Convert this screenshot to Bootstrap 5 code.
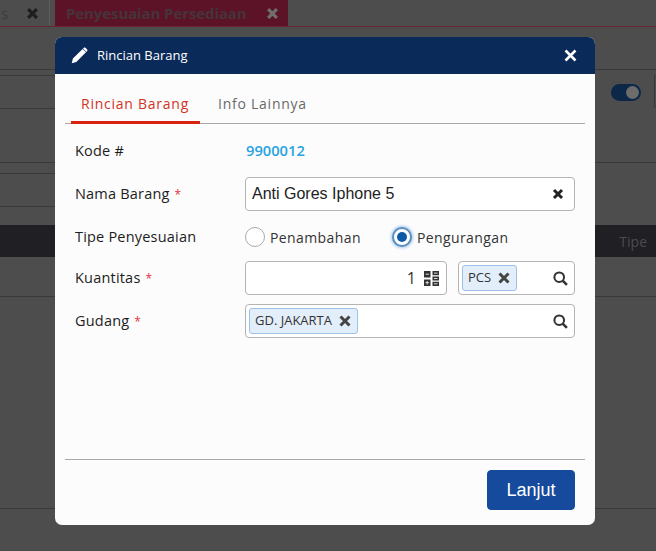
<!DOCTYPE html>
<html lang="en">
<head>
    <meta charset="UTF-8">
    <meta name="viewport" content="width=device-width, initial-scale=1.0">
    <title>Rincian Barang</title>
    <link href="https://cdn.jsdelivr.net/npm/bootstrap@5.3.0/dist/css/bootstrap.min.css" rel="stylesheet">
    <style>
        html, body {
            height: 100%;
            overflow: hidden;
        }
        body {
            background-color: #4d4d4d;
            font-family: "Open Sans", "Liberation Sans", sans-serif;
            font-size: 14px;
            color: #1c1c1c;
            position: relative;
        }
        /* page behind the dialog */
        .page-tabs {
            height: 27px;
            border-bottom: 1px solid #6b2232;
        }
        .page-tab {
            height: 26px;
            font-weight: 700;
            font-size: 15px;
            color: #3c3c3c;
        }
        .page-tab-first {
            width: 50px;
            padding-left: 1px;
            border-right: 1px solid #5c5c5c;
            font-weight: 400;
        }
        .page-tab-active {
            width: 233px;
            margin-left: 5px;
            padding-left: 11px;
            background-color: #5c1328;
            color: #46343a;
            letter-spacing: -.1px;
        }
        .page-tab svg {
            margin-left: auto;
        }
        .page-tab-first svg {
            margin-right: 10px;
        }
        .page-tab-active svg {
            margin-right: 9px;
        }
        .page-line {
            border-bottom: 1px solid #393939;
        }
        .page-gap-42 { height: 43px; }
        .page-gap-6 { height: 6px; width: 55px; }
        .page-gap-33 { height: 33px; width: 55px; }
        .page-gap-54 { height: 54px; }
        .page-gap-11 { height: 11px; width: 55px; }
        .page-gap-18 { height: 18px; }
        .page-band {
            height: 32px;
            background-color: #1f1f24;
            color: #4c4c50;
        }
        .page-band span {
            padding-right: 9px;
        }
        .page-gap-40 { height: 40px; }
        .page-gap-212 { height: 212px; }
        .page-toggle {
            position: absolute;
            left: 611px;
            top: 84px;
            width: 30px;
            height: 17px;
            border-radius: 9px;
            background-color: #0c2748;
        }
        .page-toggle::after {
            content: "";
            position: absolute;
            right: 2px;
            top: 2px;
            width: 13px;
            height: 13px;
            border-radius: 50%;
            background-color: #6c6c6c;
        }
        .page-input-edge {
            position: absolute;
            left: 654px;
            top: 75px;
            width: 4px;
            height: 33px;
            border: 1px solid #393939;
            border-radius: 3px;
        }
        /* dialog */
        .dialog-box {
            position: absolute;
            left: 55px;
            top: 37px;
            width: 540px;
            height: 488px;
            background-color: #fcfcfd;
            border-radius: 7px;
            overflow: hidden;
        }
        .dialog-head {
            height: 37px;
            background-color: #0a2a5a;
            color: #fff;
            padding: 0 18px 0 16px;
            font-size: 13px;
        }
        .dialog-head .head-title {
            margin-left: 9px;
        }
        .dialog-tabs {
            margin: 22px 10px 0;
            height: 28px;
            border-bottom: 1px solid #a8a8a8;
        }
        .dialog-tab {
            height: 28px;
            padding: 0 10px;
            font-size: 14px;
            letter-spacing: .75px;
            color: #6a6a6a;
            line-height: 15px;
        }
        .dialog-tab-active {
            color: #d2331f;
            border-bottom: 3px solid #d9230f;
            margin-left: 6px;
            width: 129px;
            padding-left: 10px;
        }
        .dialog-tab-next {
            margin-left: 8px;
        }
        .dialog-form {
            padding: 0 20px;
        }
        .form-line {
            display: flex;
            align-items: center;
        }
        .line-kode { height: 53px; }
        .line-nama { height: 34px; }
        .line-tipe { height: 50px; padding-top: 2px; }
        .line-qty { height: 34px; }
        .line-gudang { height: 34px; margin-top: 9px; }
        .form-label-text {
            width: 170px;
            font-size: 14.5px;
            letter-spacing: .2px;
            flex-shrink: 0;
        }
        .req {
            color: #e0344a;
            font-size: 12px;
            margin-left: 1px;
        }
        .kode-value {
            color: #29a3e0;
            font-size: 14.7px;
            font-weight: 600;
            margin-left: 1px;
        }
        .field-box {
            height: 34px;
            border: 1px solid #b4b4b4;
            border-radius: 4px;
            background-color: #fff;
            display: flex;
            align-items: center;
        }
        .field-full { width: 330px; }
        .field-qty { width: 202px; }
        .field-unit { width: 117px; margin-left: 11px; }
        .nama-text {
            font-family: "Liberation Sans", Arial, sans-serif;
            font-size: 16px;
            margin-left: 6px;
            color: #222;
        }
        .field-icon {
            margin-left: auto;
            margin-right: 6px;
        }
        .field-clear {
            margin-left: auto;
            margin-right: 10px;
        }
        .field-num {
            margin-left: auto;
            margin-right: 8px;
            font-size: 16px;
            color: #333;
        }
        .field-num + svg {
            margin-right: 7px;
        }
        .tag-chip {
            height: 26px;
            margin-left: 3px;
            padding: 0 6px 0 5px;
            display: flex;
            align-items: center;
            gap: 7px;
            background-color: #e3eefb;
            border: 1px solid #9cc0e6;
            border-radius: 3px;
            font-size: 13px;
            color: #333;
        }
        .radio-dot {
            width: 20px;
            height: 20px;
            border: 1px solid #a9a9a9;
            border-radius: 50%;
            background-color: #fff;
            flex-shrink: 0;
        }
        .radio-dot-on {
            border: 2px solid #5b8fc0;
            box-shadow: 0 0 3px 1px #a9c9ea;
            position: relative;
        }
        .radio-dot-on::after {
            content: "";
            position: absolute;
            left: 3px;
            top: 3px;
            width: 10px;
            height: 10px;
            border-radius: 50%;
            background-color: #0d5aa7;
        }
        .radio-text {
            margin-left: 5px;
            letter-spacing: .4px;
            color: #333;
        }
        .radio-gap {
            margin-left: 31px;
        }
        .dialog-foot {
            position: absolute;
            left: 10px;
            right: 10px;
            top: 422px;
            border-top: 1px solid #a8a8a8;
            padding: 10px 10px 0 0;
            display: flex;
            justify-content: flex-end;
        }
        .btn-lanjut {
            width: 88px;
            height: 40px;
            padding: 0;
            background-color: #154a9c;
            border-color: #154a9c;
            font-family: "Liberation Sans", Arial, sans-serif;
            font-size: 18px;
            color: #fff;
            border-radius: 4px;
        }
    </style>
</head>
<body>
    <div class="page-tabs d-flex">
        <div class="page-tab page-tab-first d-flex align-items-center">
            s
            <svg width="13" height="13" viewBox="0 0 12 12"><path d="M2 2l8 8M10 2l-8 8" stroke="#1e1e1e" stroke-width="3"/></svg>
        </div>
        <div class="page-tab page-tab-active d-flex align-items-center">
            Penyesuaian Persediaan
            <svg width="13" height="13" viewBox="0 0 12 12"><path d="M2 2l8 8M10 2l-8 8" stroke="#6e6e6e" stroke-width="3"/></svg>
        </div>
    </div>
    <div class="page-gap-42 page-line"></div>
    <div class="page-gap-6 page-line"></div>
    <div class="page-gap-33 page-line"></div>
    <div class="page-gap-54 page-line"></div>
    <div class="page-gap-11 page-line"></div>
    <div class="page-gap-33 page-line"></div>
    <div class="page-gap-18"></div>
    <div class="page-band d-flex align-items-center justify-content-end"><span>Tipe</span></div>
    <div class="page-gap-40 page-line"></div>
    <div class="page-gap-212 page-line"></div>
    <div class="page-toggle"></div>
    <div class="page-input-edge"></div>

    <div class="dialog-box">
        <div class="dialog-head d-flex align-items-center">
            <svg width="17" height="17" viewBox="0 0 17 17"><path fill="#fff" d="M11.600 1.900l3.400 3.400-9.700 9.700-4.600 1.200 1.200-4.600zM12.600.9c.6-.6 1.400-.6 2 0l1.400 1.400c.6.6.6 1.400 0 2l-.6.6-3.400-3.400z"/></svg>
            <span class="head-title">Rincian Barang</span>
            <svg class="ms-auto" width="13" height="13" viewBox="0 0 13 13"><path d="M1.500 1.500l10 10M11.500 1.500l-10 10" stroke="#fff" stroke-width="2.600"/></svg>
        </div>
        <div class="dialog-tabs d-flex">
            <div class="dialog-tab dialog-tab-active">Rincian Barang</div>
            <div class="dialog-tab dialog-tab-next">Info Lainnya</div>
        </div>
        <div class="dialog-form">
            <div class="form-line line-kode">
                <div class="form-label-text">Kode #</div>
                <div class="kode-value">9900012</div>
            </div>
            <div class="form-line line-nama">
                <div class="form-label-text">Nama Barang <span class="req">*</span></div>
                <div class="field-box field-full">
                    <span class="nama-text">Anti Gores Iphone 5</span>
                    <svg class="field-clear" width="12" height="12" viewBox="0 0 12 12"><path d="M2 2l8 8M10 2l-8 8" stroke="#222" stroke-width="3"/></svg>
                </div>
            </div>
            <div class="form-line line-tipe">
                <div class="form-label-text">Tipe Penyesuaian</div>
                <div class="radio-dot"></div>
                <span class="radio-text">Penambahan</span>
                <div class="radio-dot radio-dot-on radio-gap"></div>
                <span class="radio-text">Pengurangan</span>
            </div>
            <div class="form-line line-qty">
                <div class="form-label-text">Kuantitas <span class="req">*</span></div>
                <div class="field-box field-qty">
                    <span class="field-num">1</span>
                    <svg width="15" height="15" viewBox="0 0 15 15"><path fill="#333" d="M0 0h6.500v6.500H0zM8.500 0H15v4.300H8.500zM8.500 5.400H15v4.200H8.500zM8.500 10.700H15V15H8.500zM0 8.500h6.500V15H0z"/><path stroke="#fff" stroke-width=".8" d="M1.500 3.200h3.500M1.500 11.700h3.500M3.200 10v3.500M10 2.100h3.500M10 7.500h3.500M10 12.800h3.500"/></svg>
                </div>
                <div class="field-box field-unit">
                    <div class="tag-chip">PCS
                        <svg width="12" height="12" viewBox="0 0 12 12"><path d="M1.500 1.500l9 9M10.500 1.500l-9 9" stroke="#444" stroke-width="3"/></svg>
                    </div>
                    <svg class="field-icon" width="15" height="15" viewBox="0 0 14 14"><circle cx="5.800" cy="5.800" r="4.500" fill="none" stroke="#333" stroke-width="1.900"/><path d="M9 9l4 4" stroke="#333" stroke-width="2.400"/></svg>
                </div>
            </div>
            <div class="form-line line-gudang">
                <div class="form-label-text">Gudang <span class="req">*</span></div>
                <div class="field-box field-full">
                    <div class="tag-chip">GD. JAKARTA
                        <svg width="12" height="12" viewBox="0 0 12 12"><path d="M1.500 1.500l9 9M10.500 1.500l-9 9" stroke="#444" stroke-width="3"/></svg>
                    </div>
                    <svg class="field-icon" width="15" height="15" viewBox="0 0 14 14"><circle cx="5.800" cy="5.800" r="4.500" fill="none" stroke="#333" stroke-width="1.900"/><path d="M9 9l4 4" stroke="#333" stroke-width="2.400"/></svg>
                </div>
            </div>
        </div>
        <div class="dialog-foot">
            <button type="button" class="btn btn-lanjut">Lanjut</button>
        </div>
    </div>
    <script src="https://cdn.jsdelivr.net/npm/bootstrap@5.3.0/dist/js/bootstrap.bundle.min.js"></script>
</body>
</html>
